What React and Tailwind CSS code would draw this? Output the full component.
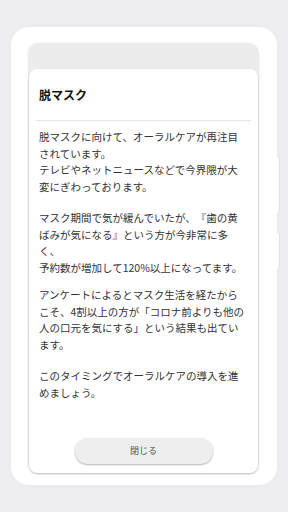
import React from "react";

export default function App() {
  const font = { fontFamily: '"Noto Sans CJK JP", "Noto Sans", sans-serif' };
  return (
    <div className="w-[288px] h-[512px] bg-[#eeeef0] pt-[27px] px-[11px] overflow-hidden" style={font}>
      <div className="relative h-[458px] rounded-[18px] bg-white pt-[16px] pl-[17px] pr-[18px] pb-[12px] shadow-[0_0_6px_rgba(0,0,0,0.04)] flex flex-col">
        <div className="absolute right-[-2px] top-[130px] w-[3px] h-[55px] bg-white rounded-r-[2px] shadow-[1px_0_1px_rgba(0,0,0,0.05)]" />
        <div className="absolute right-[-2px] top-[206px] w-[3px] h-[35px] bg-white rounded-r-[2px] shadow-[1px_0_1px_rgba(0,0,0,0.05)]" />
        <div className="flex-1 flex flex-col rounded-[10px] bg-[#ececec] pt-[26px] shadow-[0_0_3px_rgba(0,0,0,0.06)]">
          <div className="flex-1 flex flex-col mx-[1px] bg-white rounded-[8px] shadow-[0_1px_2px_rgba(0,0,0,0.25)]">
            <div className="h-[51px] flex items-center px-[10px]">
              <h1 className="text-[12px] font-bold text-[#111] leading-none">脱マスク</h1>
            </div>
            <div className="mx-[7px] h-px bg-[#e6e6e6]" />
            <div className="flex-1 pl-[10px] pr-[12px] pt-[8px] text-[10.5px] leading-[16.5px] text-[#333] [text-spacing-trim:space-all]">
              <p>
                脱マスクに向けて、オーラルケアが再注目されています。
                <br />
                テレビやネットニュースなどで今界隈が大変にぎわっております。
              </p>
              <p className="mt-[15px]">
                マスク期間で気が緩んでいたが、『歯の黄ばみが気になる』という方が今非常に多く、
                <br />
                予約数が増加して120%以上になってます。
              </p>
              <p className="mt-[11px]">
                アンケートによるとマスク生活を経たからこそ、4割以上の方が「コロナ前よりも他の人の口元を気にする」という結果も出ています。
              </p>
              <p className="mt-[15px]">このタイミングでオーラルケアの導入を進めましょう。</p>
            </div>
            <div className="flex justify-center pb-[9px]">
              <button className="w-[138px] h-[26px] rounded-full bg-[#eeeeee] text-[9px] text-[#555] shadow-[0_1px_2px_rgba(0,0,0,0.3)]">
                閉じる
              </button>
            </div>
          </div>
        </div>
      </div>
    </div>
  );
}
